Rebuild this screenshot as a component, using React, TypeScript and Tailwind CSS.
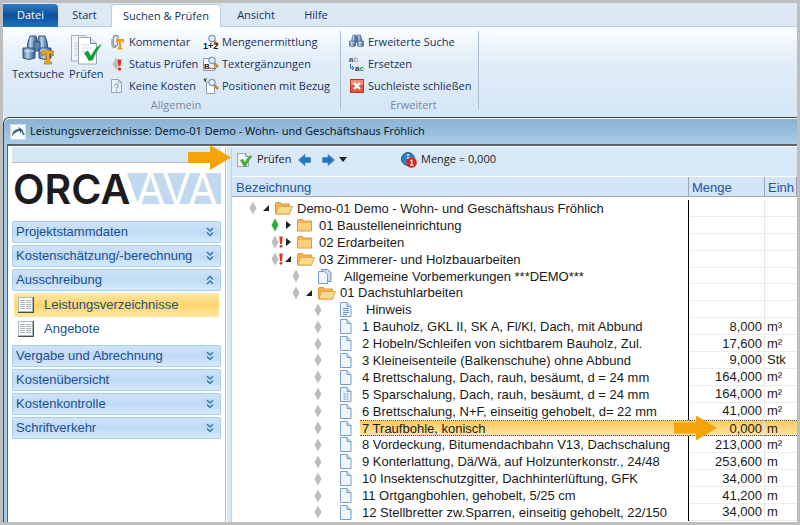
import React from "react";

const UI = "font-['Open_Sans','Noto_Sans',sans-serif]";

/* ---------- ribbon icons ---------- */

function Binoculars({ size, big }: { size: number; big?: boolean }) {
  return (
    <svg width={size} height={size} viewBox="0 0 32 32" aria-hidden="true">
      <defs>
        <linearGradient id="tube" x1="0" x2="1">
          <stop offset="0" stopColor="#3f6796" />
          <stop offset="0.35" stopColor="#bcd3ea" />
          <stop offset="1" stopColor="#2c527f" />
        </linearGradient>
      </defs>
      <path d="M8 2h6l1 4v9H5l1-7z" fill="url(#tube)" stroke="#35587f" />
      <path d="M17 2h6l2 6 1 7H16V6z" fill="url(#tube)" stroke="#35587f" />
      <path d="M12 8h6v9h-6z" fill="#5d83b0" stroke="#35587f" />
      <path d="M1 14h12v10q-6 3-12 0z" fill="url(#tube)" stroke="#35587f" />
      <path d="M17 14h12v10q-6 3-12 0z" fill="url(#tube)" stroke="#35587f" />
      <path d="M2 17h10M18 17h10" stroke="#dce9f6" />
      {big && (
        <path d="M20 17h12v4.500h-2l-.5-2h-2v8l2 .5V30h-7v-2l2-.5v-8h-2l-.5 2h-2z" fill="#f5a81c" stroke="#b97708" strokeWidth="0.800" />
      )}
    </svg>
  );
}

function CheckDocs() {
  return (
    <svg width="32" height="32" viewBox="0 0 32 32" aria-hidden="true">
      <path d="M1.500 1.500h14l4 4V27h-18z" fill="#f3f5f8" stroke="#a4adb8" />
      <path d="M4 9h9M4 12h9M4 15h9M4 18h9M4 21h9" stroke="#c6ccd4" />
      <path d="M8.500 3.500h12l6 6V30h-18z" fill="#fff" stroke="#98a2ae" />
      <path d="M20.500 3.500v6h6" fill="#dfe8f1" stroke="#6f8297" />
      <path d="M11 11h8M11 14h11M11 17h5" stroke="#d3d8de" />
      <path d="M14 19l4-2.500 3 5.500c3-6 6-10 11-12-3 4-7 10-9 16l-4 1z" fill="#12a03c" />
    </svg>
  );
}

function Clip() {
  return (
    <svg width="16" height="16" viewBox="0 0 16 16" aria-hidden="true">
      <path d="M7.500 4v6a1.500 1.500 0 0 1-4 0V4a2.500 2.500 0 0 1 5 0" fill="none" stroke="#8b95a1" strokeWidth="1.300" />
      <path d="M2 5v6a2.500 2.500 0 0 0 4 2" fill="none" stroke="#8b95a1" strokeWidth="1.200" />
      <path d="M6 5h8v3.500h-1.500L12 7.500h-.8v6l1.300.5v1.500h-5V14l1.300-.5v-6H8L7.500 8.500H6z" fill="#f09a1a" />
    </svg>
  );
}

function StatusMark() {
  return (
    <svg width="16" height="16" viewBox="0 0 16 16" aria-hidden="true">
      <path d="M6 2l4.500 6L6 14 2.500 8z" fill="#c3bcbc" />
      <path d="M7.500 3.500h4L10.500 10h-2z" fill="#e0301e" />
      <circle cx="9.500" cy="13" r="1.700" fill="#e0301e" />
    </svg>
  );
}

function QuestionDoc() {
  return (
    <svg width="16" height="16" viewBox="0 0 16 16" aria-hidden="true">
      <path d="M1.500 1.500h7l3 3v10h-10z" fill="#eaf2fa" stroke="#8fa5bd" />
      <path d="M8.500 1.500v3h3" fill="none" stroke="#8fa5bd" />
      <path d="M4.500 7.500q0-1.500 2-1.500t2 1.500-2 2v1" fill="none" stroke="#6f87a3" />
      <circle cx="6.500" cy="12.500" r="0.800" fill="#6f87a3" />
    </svg>
  );
}

function Lens() {
  return (
    <>
      <path d="M11 7l4 4" stroke="#c9822e" strokeWidth="2.500" />
      <circle cx="9" cy="4.500" r="3.200" fill="#dfeefa" stroke="#7f9ab8" strokeWidth="1.200" />
    </>
  );
}

function SumLens() {
  return (
    <svg width="16" height="16" viewBox="0 0 16 16" className="overflow-visible" aria-hidden="true">
      <Lens />
      <text x="0" y="15" className="font-['Liberation_Sans',sans-serif] text-[9px] font-bold" fill="#1b1b1b">1+2</text>
    </svg>
  );
}

function TextLens() {
  return (
    <svg width="16" height="16" viewBox="0 0 16 16" className="overflow-visible" aria-hidden="true">
      <path d="M.5 2.500h11v12H.5z" fill="#f7f9fb" stroke="#8d98a5" />
      <Lens />
      <text x="1" y="13" className="font-['Liberation_Sans',sans-serif] text-[8px] font-bold" fill="#1b1b1b">B...</text>
    </svg>
  );
}

function RefLens() {
  return (
    <svg width="16" height="16" viewBox="0 0 16 16" aria-hidden="true">
      <path d="M3.500 4.500h5l3 3v8h-8z" fill="#fff" stroke="#8d98a5" />
      <path d="M1 1l1.500 3M1 1h3M1 1l2 2" stroke="#333" fill="none" />
      <Lens />
    </svg>
  );
}

function ReplaceIcon() {
  return (
    <svg width="16" height="16" viewBox="0 0 16 16" className="overflow-visible" aria-hidden="true">
      <text x="0" y="6" className="font-['Liberation_Sans',sans-serif] text-[8px] font-bold" fill="#4c4c4c">a<tspan fill="#a9b0b8">b</tspan></text>
      <text x="6" y="15" className="font-['Liberation_Sans',sans-serif] text-[8px] font-bold" fill="#333">a<tspan fill="#1c9a43">c</tspan></text>
      <path d="M1.500 8v4h3M3 10l2 2-2 2" fill="none" stroke="#2f67a6" />
    </svg>
  );
}

function CloseIcon() {
  return (
    <svg width="16" height="16" viewBox="0 0 16 16" aria-hidden="true">
      <rect x="1.500" y="1.500" width="13" height="13" fill="#e2553d" stroke="#b23a27" />
      <path d="M2 2h12v5H2z" fill="#ee8a76" />
      <path d="M5 5l6 6M11 5l-6 6" stroke="#fff" strokeWidth="2.400" />
    </svg>
  );
}

/* ---------- tree icons ---------- */

function Diamond({ green }: { green?: boolean }) {
  return (
    <svg width="8" height="14" viewBox="0 0 8 14" className="shrink-0" aria-hidden="true">
      <path d="M4 .5L7.500 7 4 13.500.5 7z" fill={green ? "#2fae37" : "#bdbdbd"} />
    </svg>
  );
}

function Bang() {
  return (
    <svg width="4" height="12" viewBox="0 0 4 12" aria-hidden="true">
      <path d="M.3.5h3.400L3 8H1z" fill="#e2321f" />
      <circle cx="2" cy="10.300" r="1.400" fill="#e2321f" />
    </svg>
  );
}

function Folder({ open }: { open?: boolean }) {
  return (
    <svg width="18" height="14" viewBox="0 0 18 14" aria-hidden="true">
      <path d="M.5 2.500q0-1 1-1h4l1 1.500h8v10H.5z" fill="#f3b44e" stroke="#dc9a3a" />
      {open ? (
        <path d="M3.500 5.500h14l-3 7.500H.8z" fill="#fddb8c" stroke="#e3a445" />
      ) : (
        <path d="M1 5h13v7.500H1z" fill="#fccf78" />
      )}
    </svg>
  );
}

function Doc({ kind }: { kind: "plain" | "lines" | "stack" | "pattern" }) {
  return (
    <svg width="14" height="15" viewBox="0 0 14 15" aria-hidden="true">
      {kind === "stack" && <path d="M3.500.5h6l3.500 3v9H3.500z" fill="#cfe0f2" stroke="#6e90b8" />}
      <path d={kind === "stack" ? "M.5 2.500h6l3 3v9h-9z" : "M.5 .5h6.500l4 4v10H.5z"} fill="#eef5fc" stroke="#7d9cc2" />
      {kind !== "stack" && <path d="M7 .5v4h4" fill="#c3d8ee" stroke="#7d9cc2" />}
      {kind === "lines" && <path d="M3 6.500h6M3 8.500h6M3 10.500h6M3 12.500h4" stroke="#5f93cf" />}
      {kind === "pattern" && (
        <path d="M3 7h6M3 9.500h6M3 12h6M4.500 6v7M7.500 6v7" stroke="#a9c0da" strokeWidth="0.900" />
      )}
    </svg>
  );
}

function Pointer() {
  return (
    <svg width="44" height="25" viewBox="0 0 44 25" aria-hidden="true">
      <path d="M0 7h22V0l21 12.500L22 25v-7H0z" fill="#f5a30a" />
    </svg>
  );
}

/* ---------- ribbon ---------- */

function BigTool({ icon, label }: { icon: React.ReactNode; label: string }) {
  return (
    <button className="flex flex-col items-center pt-[3px]">
      {icon}
      <span className="leading-4">{label}</span>
    </button>
  );
}

function ToolColumn({ tools }: { tools: [React.ReactNode, string][] }) {
  return (
    <div className="flex flex-col">
      {tools.map(([icon, label]) => (
        <button key={label} className="flex h-[22px] items-center gap-[3px] whitespace-nowrap">
          {icon}
          <span>{label}</span>
        </button>
      ))}
    </div>
  );
}

function Ribbon() {
  return (
    <header className={`${UI} shrink-0 text-[11px] text-[#15305c]`}>
      <nav className="flex h-6 bg-[#dce9f5] shadow-[inset_0_-1px_0_#b9cfe5]">
        <button className="mt-px w-[55px] rounded-tr-sm bg-linear-to-b from-[#2f7cc4] via-[#0f4f9c] to-[#1e74c2] text-white">Datei</button>
        <button className="w-[53px]">Start</button>
        <button className="mt-px w-[110px] rounded-t-sm border border-b-0 border-[#b9cfe5] bg-white">Suchen &amp; Prüfen</button>
        <button className="w-[70px]">Ansicht</button>
        <button className="w-[50px]">Hilfe</button>
      </nav>
      <div className="flex h-[90px] bg-linear-to-b from-[#fbfeff] via-[#e0edf8] via-40% to-[#d6e6f6] pt-1">
        <section className="mb-2 flex w-[338px] flex-col border-r border-[#a9bfd8] pl-[9px]">
          <div className="flex">
            <div className="flex w-[98px] gap-[5px]">
              <BigTool icon={<Binoculars size={32} big />} label="Textsuche" />
              <BigTool icon={<CheckDocs />} label="Prüfen" />
            </div>
            <div className="w-[93px]">
              <ToolColumn tools={[[<Clip />, "Kommentar"], [<StatusMark />, "Status Prüfen"], [<QuestionDoc />, "Keine Kosten"]]} />
            </div>
            <ToolColumn tools={[[<SumLens />, "Mengenermittlung"], [<TextLens />, "Textergänzungen"], [<RefLens />, "Positionen mit Bezug"]]} />
          </div>
          <h2 className="text-center leading-4 text-[#7888a0]">Allgemein</h2>
        </section>
        <section className="mb-2 flex w-[138px] flex-col border-r border-[#a9bfd8] pl-2">
          <ToolColumn tools={[[<Binoculars size={16} />, "Erweiterte Suche"], [<ReplaceIcon />, "Ersetzen"], [<CloseIcon />, "Suchleiste schließen"]]} />
          <h2 className="text-center leading-4 text-[#7888a0]">Erweitert</h2>
        </section>
      </div>
    </header>
  );
}

/* ---------- sidebar ---------- */

function Logo() {
  return (
    <svg width="210" height="36" viewBox="0 0 210 36" className="overflow-visible" role="img" aria-label="ORCA AVA">
      <path d="M115 2h94v31h-83z" fill="#c1d8ef" />
      <text x="1" y="33" className="font-['Inter',sans-serif] text-[41px] font-semibold" fill="#1b1b20">ORCA</text>
      <text x="124" y="33" className="font-['Inter',sans-serif] text-[42px] font-normal" fill="#ffffff">AVA</text>
    </svg>
  );
}

function Section({ label, open }: { label: string; open?: boolean }) {
  return (
    <button
      aria-expanded={!!open}
      className="flex h-[22px] w-full items-center justify-between rounded-xs border border-[#a5cfee] bg-linear-to-b from-[#cfe3f8] via-[#bfdaf4] to-[#d6eafb] pr-1.5 pl-[3px] text-[#20508f]"
    >
      <span>{label}</span>
      <svg width="8" height="10" viewBox="0 0 8 10" className={open ? "rotate-180" : ""} aria-hidden="true">
        <path d="M1 1l3 3 3-3M1 5.500l3 3 3-3" fill="none" stroke="#2b76b5" strokeWidth="1.400" />
      </svg>
    </button>
  );
}

function SideLink({ label, active }: { label: string; active?: boolean }) {
  return (
    <a
      href="#"
      className={`mx-0.5 flex h-6 items-center gap-2.5 pl-1 text-[#20508f] ${active ? "bg-linear-to-b from-[#ffe7a6] via-[#ffd56e] to-[#ffe9a0]" : ""}`}
    >
      <svg width="16" height="16" viewBox="0 0 16 16" aria-hidden="true">
        <path d="M0 0h16v16H0z" fill="#4b4b4b" />
        <path d="M0 0h15v15H0z" fill="#aeb4ba" />
        <path d="M1 1h13v13H1z" fill="#fff" />
        <path d="M2 3.500h5M8 3.500h5M2 5.500h5M8 5.500h5M2 7.500h5M8 7.500h5M2 9.500h5M8 9.500h5M2 11.500h5M8 11.500h5" stroke="#a9b2bb" />
      </svg>
      {label}
    </a>
  );
}

function Sidebar() {
  return (
    <aside className="flex w-[217px] shrink-0 flex-col px-1 text-[13px]">
      <div className="h-4 border-b border-[#b0b8c0] bg-[#d6e7f7]" />
      <div className="mt-2 mb-[14px] flex">
        <Logo />
      </div>
      <div className="flex flex-col gap-0.5">
        <Section label="Projektstammdaten" />
        <Section label="Kostenschätzung/-berechnung" />
        <Section label="Ausschreibung" open />
        <div className="mb-0.5">
          <SideLink label="Leistungsverzeichnisse" active />
          <SideLink label="Angebote" />
        </div>
        <Section label="Vergabe und Abrechnung" />
        <Section label="Kostenübersicht" />
        <Section label="Kostenkontrolle" />
        <Section label="Schriftverkehr" />
      </div>
    </aside>
  );
}

/* ---------- main list ---------- */

type Row = {
  level: 0 | 1 | 2 | 3;
  icon: "open" | "closed" | "plain" | "lines" | "stack" | "pattern";
  label: string;
  toggle?: "open" | "closed";
  green?: boolean;
  bang?: boolean;
  inset?: boolean;
  qty?: string;
  unit?: string;
  selected?: boolean;
};

const rows: Row[] = [
  { level: 0, icon: "open", toggle: "open", label: "Demo-01 Demo - Wohn- und Geschäftshaus Fröhlich" },
  { level: 1, icon: "closed", toggle: "closed", green: true, label: "01 Baustelleneinrichtung" },
  { level: 1, icon: "closed", toggle: "closed", bang: true, label: "02 Erdarbeiten" },
  { level: 1, icon: "open", toggle: "open", bang: true, label: "03 Zimmerer- und Holzbauarbeiten" },
  { level: 2, icon: "stack", inset: true, label: "Allgemeine Vorbemerkungen ***DEMO***" },
  { level: 2, icon: "open", toggle: "open", label: "01 Dachstuhlarbeiten" },
  { level: 3, icon: "lines", inset: true, label: "Hinweis" },
  { level: 3, icon: "plain", label: "1 Bauholz, GKL II, SK A, Fl/Kl, Dach, mit Abbund", qty: "8,000", unit: "m³" },
  { level: 3, icon: "plain", label: "2 Hobeln/Schleifen von sichtbarem Bauholz, Zul.", qty: "17,600", unit: "m²" },
  { level: 3, icon: "plain", label: "3 Kleineisenteile (Balkenschuhe) ohne Abbund", qty: "9,000", unit: "Stk" },
  { level: 3, icon: "plain", label: "4 Brettschalung, Dach, rauh, besäumt, d = 24 mm", qty: "164,000", unit: "m²" },
  { level: 3, icon: "pattern", label: "5 Sparschalung, Dach, rauh, besäumt, d = 24 mm", qty: "164,000", unit: "m²" },
  { level: 3, icon: "plain", label: "6 Brettschalung, N+F, einseitig gehobelt, d= 22 mm", qty: "41,000", unit: "m²" },
  { level: 3, icon: "plain", label: "7 Traufbohle, konisch", qty: "0,000", unit: "m", selected: true },
  { level: 3, icon: "plain", label: "8 Vordeckung, Bitumendachbahn V13, Dachschalung", qty: "213,000", unit: "m²" },
  { level: 3, icon: "plain", label: "9 Konterlattung, Dä/Wä, auf Holzunterkonstr., 24/48", qty: "253,600", unit: "m" },
  { level: 3, icon: "plain", label: "10 Insektenschutzgitter, Dachhinterlüftung, GFK", qty: "34,000", unit: "m" },
  { level: 3, icon: "plain", label: "11 Ortgangbohlen, gehobelt, 5/25 cm", qty: "41,200", unit: "m" },
  { level: 3, icon: "plain", label: "12 Stellbretter zw.Sparren, einseitig gehobelt, 22/150", qty: "34,000", unit: "m" },
];

const indent = ["pl-[17px]", "pl-[39px]", "pl-[60px]", "pl-[82px]"];
const marked = "border-y border-y-[#555] [border-block-style:dotted] bg-linear-to-b from-[#fcc95c] to-[#ffe3a0]";

function TreeRow({ row }: { row: Row }) {
  const cell = row.selected ? marked : "border-b border-b-[#ececec]";
  return (
    <tr className="relative flex h-[17px] min-h-0">
      <td className={`flex min-w-0 flex-1 items-center border-r ${row.selected ? "border-r-[#fdd582]" : "border-r-black"} ${indent[row.level]}`}>
        <Diamond green={row.green} />
        <span className="flex w-[5px] shrink-0">{row.bang && <Bang />}</span>
        <span className="flex w-[13px] shrink-0">
          {row.toggle && (
            <button aria-label={row.label} className="flex">
              <svg width="8" height="10" viewBox="0 0 8 10" aria-hidden="true">
                <path d={row.toggle === "open" ? "M7 2v6H1z" : "M2 1l5 4-5 4z"} fill="#222" />
              </svg>
            </button>
          )}
        </span>
        <span className="flex w-5 shrink-0">
          {row.icon === "open" || row.icon === "closed" ? <Folder open={row.icon === "open"} /> : <Doc kind={row.icon} />}
        </span>
        <span className={`flex h-full flex-1 items-center whitespace-nowrap ${row.inset ? "pl-1.5" : "pl-0.5"} ${row.selected ? marked : ""}`}>
          {row.label}
        </span>
      </td>
      <td className={`flex w-[76px] items-center justify-end border-r border-r-[#e6e6e6] pr-0.5 ${cell}`}>{row.qty}</td>
      <td className={`flex w-8 items-center pl-0.5 ${cell}`}>{row.unit}</td>
      {row.selected && (
        <td className="absolute top-1/2 right-[79px] -translate-y-1/2">
          <Pointer />
        </td>
      )}
    </tr>
  );
}

function NavArrow({ back }: { back?: boolean }) {
  return (
    <svg width="13" height="12" viewBox="0 0 13 12" className={back ? "rotate-180" : ""} aria-hidden="true">
      <path d="M.5 3.500H6V.5L12.500 6 6 11.500v-3H.5z" fill="#2a74b8" stroke="#4c95d4" />
    </svg>
  );
}

function Toolbar() {
  return (
    <div className={`${UI} relative flex h-[29px] shrink-0 items-center bg-[#d9e8f6] pb-1 pl-[5px] text-[11px] text-[#222]`}>
      <div className="absolute -top-0.5 -left-[44px]">
        <Pointer />
      </div>
      <button className="flex w-[61px] items-center gap-1">
        <svg width="16" height="16" viewBox="0 0 16 16" aria-hidden="true">
          <path d="M.5 1.500h8l3 3v10H.5z" fill="#f1f7fc" stroke="#8ca6c1" />
          <path d="M8.500 1.500v3h3" fill="none" stroke="#8ca6c1" />
          <path d="M3 8l3-1 2 3c2-4 4-6 6-7l1 2c-3 3-5 7-6 10H7z" fill="#53a83a" />
        </svg>
        Prüfen
      </button>
      <button className="flex w-6" aria-label="Zurück"><NavArrow back /></button>
      <button className="flex w-[79px] items-center gap-1" aria-label="Weiter">
        <NavArrow />
        <svg width="8" height="5" viewBox="0 0 8 5" aria-hidden="true"><path d="M0 0h8L4 5z" fill="#222" /></svg>
      </button>
      <svg width="16" height="16" viewBox="0 0 16 16" aria-hidden="true">
        <circle cx="7" cy="7" r="6.500" fill="#2f83c5" stroke="#1d5f9b" />
        <path d="M7 2v2M6 6h2v5" stroke="#fff" strokeWidth="1.500" fill="none" />
        <circle cx="10.500" cy="10.500" r="5.300" fill="#dc2522" />
        <path d="M9.300 9l1.500-1v5M9 13.200h3.500" stroke="#fff" strokeWidth="1.200" fill="none" />
      </svg>
      <span className="pl-1">Menge = 0,000</span>
    </div>
  );
}

function Main() {
  return (
    <main className="flex min-h-0 min-w-0 flex-1 flex-col bg-white">
      <Toolbar />
      <table className="flex min-h-0 flex-1 flex-col text-[13px] leading-[15px] text-[#1a1a1a]">
        <thead className="mb-[3px] block shrink-0">
          <tr className="flex h-[21px] border-y border-t-white border-b-[#a3a9b0] bg-[#d2e4f5] text-left text-[#2355a0]">
            <th className="flex flex-1 items-center border-r border-[#9aa3ad] pt-px pl-1 font-normal">Bezeichnung</th>
            <th className="flex w-[76px] items-center border-r border-[#9aa3ad] pt-px pl-[3px] font-normal">Menge</th>
            <th className="flex w-8 items-center border-r border-[#9aa3ad] pt-px pl-[3px] font-normal">Einh</th>
          </tr>
        </thead>
        <tbody className="mb-px flex min-h-0 flex-1 flex-col">
          {rows.map((row) => (
            <TreeRow key={row.label} row={row} />
          ))}
        </tbody>
      </table>
    </main>
  );
}

export default function App() {
  return (
    <div className="flex h-screen flex-col overflow-hidden border-[3px] border-[#bebebe] bg-white font-['Liberation_Sans',Arial,sans-serif]">
      <Ribbon />
      <div className="flex min-h-0 flex-1 flex-col rounded-tl-md border-t border-l border-[#3f474d] bg-[#a5c9e6] pl-[3px]">
        <div className="-ml-[3px] flex h-[26px] shrink-0 items-center gap-1 rounded-tl-md border-t border-white bg-linear-to-b from-[#8ab3d4] to-[#a8cbe7] pl-1.5 font-['Noto_Sans','Open_Sans',sans-serif] text-[11px] text-[#101c2c]">
          <svg width="16" height="16" viewBox="0 0 16 16" aria-hidden="true">
            <path d="M.5 .5h15v15H.5z" fill="#f7fafc" stroke="#cfd9e2" />
            <path d="M2 12c0-4 3-7 7-7l-1-2 5 3-3 3V7C7 7 4 9 2 12z" fill="#2f5d80" />
            <path d="M12 7l2 4" stroke="#2f5d80" strokeWidth="1.500" />
          </svg>
          <h1>Leistungsverzeichnisse: Demo-01 Demo - Wohn- und Geschäftshaus Fröhlich</h1>
        </div>
        <div className="flex min-h-0 flex-1 border-t-2 border-l border-[#5d6266] bg-white pt-px">
          <Sidebar />
          <div className="w-[7px] shrink-0 border-x border-x-[#b4bcc4] border-r-[#c3d3e2] bg-[#d6e7f7] shadow-[inset_1px_0_0_#fff]" />
          <Main />
        </div>
      </div>
    </div>
  );
}
